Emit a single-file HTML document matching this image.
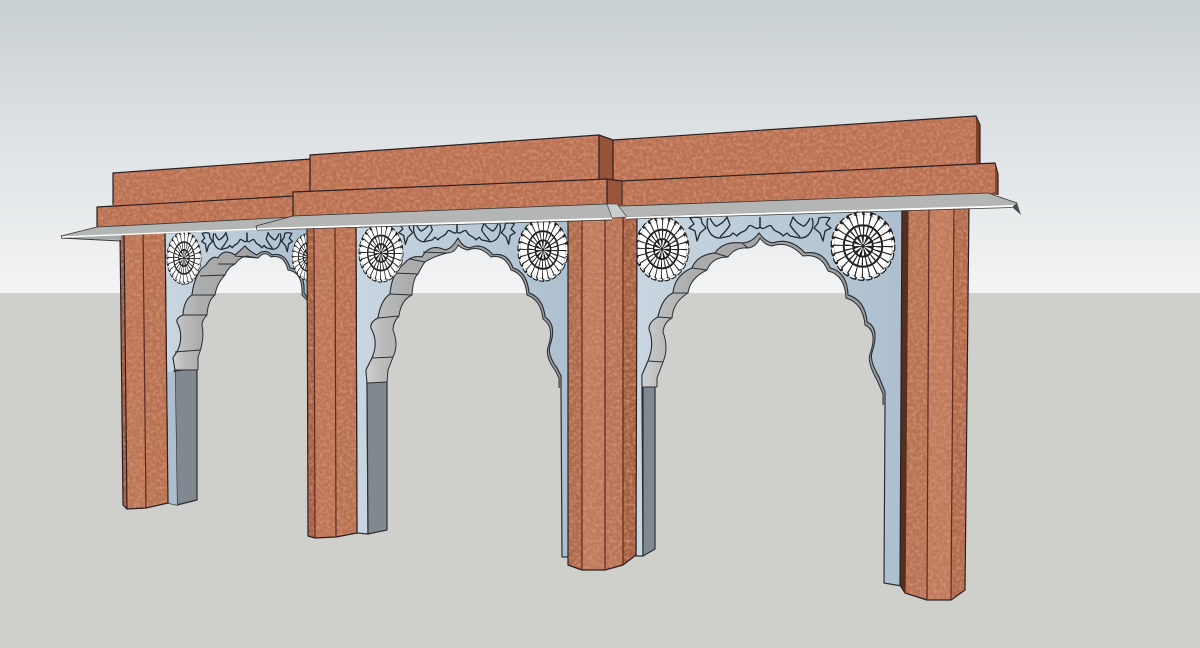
<!DOCTYPE html>
<html><head><meta charset="utf-8"><title>Arches</title>
<style>html,body{margin:0;padding:0;background:#cfd0cb}svg{display:block}
.b{filter:url(#t)}
.l{fill:none;stroke:#2a2022;stroke-width:1.2;stroke-linejoin:round}
.w{stroke:#2a2f35;stroke-width:1.2;stroke-linejoin:round}
.i{fill:none;stroke:#2a2f35;stroke-width:1;stroke-linejoin:round}
.c{fill:#b4b6b6;stroke:#333;stroke-width:.8;stroke-linejoin:round}
.v{fill:none;stroke:#1f2a33;stroke-width:1.3;stroke-linejoin:round;vector-effect:non-scaling-stroke}
</style></head><body>
<svg xmlns="http://www.w3.org/2000/svg" width="1200" height="648" viewBox="0 0 1200 648">
<defs>
<linearGradient id="sky" x1="0" y1="0" x2="0" y2="1"><stop offset="0" stop-color="#c8cfd3"/><stop offset=".5" stop-color="#dfe3e5"/><stop offset="1" stop-color="#f3f4f5"/></linearGradient>
<linearGradient id="bl" x1="0" y1="0" x2="1" y2="0"><stop offset="0" stop-color="#c9d6e1"/><stop offset="1" stop-color="#adbfcf"/></linearGradient>
<linearGradient id="gr" x1="0" y1="0" x2="1" y2="0"><stop offset="0" stop-color="#d0d0d0"/><stop offset=".08" stop-color="#bcbcbc"/><stop offset=".2" stop-color="#acadad"/><stop offset=".5" stop-color="#a3a4a5"/><stop offset="1" stop-color="#999a9b"/></linearGradient>
<filter id="t" x="0" y="0" width="100%" height="100%" color-interpolation-filters="sRGB">
<feTurbulence type="fractalNoise" baseFrequency=".3" numOctaves="3" seed="5" result="n"/>
<feColorMatrix in="n" values="0 0 0 0 .86 0 0 0 0 .6 0 0 0 0 .48 1.6 0 0 0 -.6" result="a"/>
<feComposite in="a" in2="SourceGraphic" operator="in" result="c"/>
<feMerge><feMergeNode in="SourceGraphic"/><feMergeNode in="c"/></feMerge>
</filter>
<g id="ros">
<circle r="29" fill="#fff" stroke="none"/>
<circle r="29.5" fill="none" stroke="#222" stroke-width="3.4" stroke-linecap="round" stroke-dasharray="3.4 4.32"/>
<circle r="29" fill="none" stroke="#fff" stroke-width="2" stroke-linecap="round" stroke-dasharray="3.4 4.32"/>
<circle r="24" fill="none" stroke="#222" stroke-width="9.5" stroke-dasharray="1.05 5.23"/>
<circle r="18.5" fill="#fff" stroke="#222" stroke-width="1.9"/>
<circle r="13.5" fill="none" stroke="#222" stroke-width="8" stroke-dasharray="1.1 2.43"/>
<circle r="9.5" fill="#fff" stroke="#222" stroke-width="1.8"/>
<circle r="5.5" fill="none" stroke="#222" stroke-width="7" stroke-dasharray="1.6 1.5"/>
<circle r="1.8" fill="#222"/>
</g>
<g id="vh">
<path class="v" d="M0 -8V2M0 2C-4 7 -9 -3 -12 2C-15 8 -20 6 -23 11L-27 8L-30 11L-40 13C-50 13 -55 2 -52 -7"/>
<path class="v" d="M-50 -7C-48 -2 -44 2 -43 1C-38 -2 -36 -3 -33 -8L-30 0C-33 5 -36 8 -40 12"/>
<path class="v" d="M-70 -7C-66 -8 -62 -8 -59 -7L-58 -2L-54 3L-60 8L-63 16L-65 6L-71 3L-66 -1Z"/>
</g>
<g id="vine"><use href="#vh"/><use href="#vh" transform="scale(-1,1)"/></g>
</defs>

<rect width="1200" height="293" fill="url(#sky)"/>
<rect y="293" width="1200" height="355" fill="#cfd0cb"/>

<!-- left beams -->
<polygon class="b" fill="#b97053" points="113,173 311,159 311,195 113,207"/>
<polygon class="b" fill="#b86f52" points="97,207 294,196 294,218 97,228"/>
<path class="l" d="M113 205V173L311 159M97 228V207L294 196"/>

<!-- wall 1 -->
<path class="w" fill="url(#bl)" d="M168 503L177 505L174 371L175 370L173 358L178 350Q184 335 177 322Q176 318 183 315Q184 300 192 295Q195 272 206 265Q212 255 218 258Q224 248 235 255Q240 251 245 246Q250 252 257 255Q265 248 272 255Q285 252 290 268Q305 270 304 293L308 299L308 226L165 233Z"/>
<polygon class="w" fill="#81888f" points="175,371 197,368 197,500 177,505"/>
<polygon fill="#aebecd" points="168,372 175,372 177,505 168,503"/>
<path fill="url(#gr)" fill-rule="evenodd" d="M175 370L173 358L178 350Q184 335 177 322Q176 318 183 315Q184 300 192 295Q195 272 206 265Q212 255 218 258Q224 248 235 255Q240 251 245 246Q250 252 257 255Q265 248 272 255Q285 252 290 268Q305 270 304 293L308 299ZM175 370L198 370L198 357Q205 340 202 325Q202 320 207 315Q208 300 215 295Q217 283 225 275Q228 267 235 264Q240 257 247 256Q252 257 258 258Q265 250 271 257Q284 254 288 270Q303 272 302 295L308 301L308 299Z"/>
<path class="i" d="M175 370L173 358L178 350Q184 335 177 322Q176 318 183 315Q184 300 192 295Q195 272 206 265Q212 255 218 258Q224 248 235 255Q240 251 245 246Q250 252 257 255Q265 248 272 255Q285 252 290 268Q305 270 304 293L308 299M198 370L198 357Q205 340 202 325Q202 320 207 315Q208 300 215 295Q217 283 225 275Q228 267 235 264Q240 257 247 256Q252 257 258 258Q265 250 271 257Q284 254 288 270Q303 272 302 295L308 301M175 370L198 370M175 352L200 350M183 315L207 315M192 295L215 295M200 276L225 275M218 264L235 264M235 256L258 258"/>
<use href="#ros" transform="translate(184,258) scale(.56,.86)"/>
<use href="#ros" transform="translate(308,257) scale(.52,.76)"/>
<use href="#vine" transform="translate(247,239) scale(.64,.8)"/>
<!-- pier 1 -->
<g>
<polygon class="b" fill="#9c573c" points="120,232 124,232 127,509 123,505"/>
<polygon class="b" fill="#bb7456" points="124,232 143,232 146,508 127,509"/>
<polygon class="b" fill="#b77052" points="143,232 165,232 168,503 146,508"/>
<path class="l" d="M120 232L123 505L127 509L146 508L168 503L165 232M124 232L127 509"/>
<path class="l" style="stroke:#5c2a22" d="M143 232L146 508"/>
</g>

<!-- wall 2 -->
<path class="w" fill="url(#bl)" d="M357 533L368 534L367 383L366 370L372 358Q379 342 371 328Q370 322 378 318Q381 300 390 294Q392 272 404 264Q411 255 422 257Q430 243 445 250Q452 249 458 238Q462 247 470 248Q482 242 493 255Q507 252 513 268Q527 272 529 293Q543 298 545 317Q557 325 550 345Q547 355 557 368L561 376L561 388L562 557L570 557L570 217L356 227Z"/>
<polygon class="w" fill="#81888f" points="367,383 387,380 387,530 368,534"/>
<path fill="url(#gr)" fill-rule="evenodd" d="M367 383L366 370L372 358Q379 342 371 328Q370 322 378 318Q381 300 390 294Q392 272 404 264Q411 255 422 257Q430 243 445 250Q452 249 458 238Q462 247 470 248Q482 242 493 255Q507 252 513 268Q527 272 529 293Q543 298 545 317Q557 325 550 345Q547 355 557 368L561 376L561 388ZM367 383L387 382L388 370L393 357Q399 345 393 330Q393 322 399 316Q401 300 412 295Q413 278 418 274Q423 264 425 262Q432 257 447 253Q455 253 458 245Q462 249 468 250Q480 245 491 257Q505 254 511 270Q525 274 527 295Q541 300 543 319Q555 327 548 347Q545 357 555 370L559 378L559 388L561 388Z"/>
<path class="i" d="M367 383L366 370L372 358Q379 342 371 328Q370 322 378 318Q381 300 390 294Q392 272 404 264Q411 255 422 257Q430 243 445 250Q452 249 458 238Q462 247 470 248Q482 242 493 255Q507 252 513 268Q527 272 529 293Q543 298 545 317Q557 325 550 345Q547 355 557 368L561 376L561 388M387 382L388 370L393 357Q399 345 393 330Q393 322 399 316Q401 300 412 295Q413 278 418 274Q423 264 425 262Q432 257 447 253Q455 253 458 245Q462 249 468 250Q480 245 491 257Q505 254 511 270Q525 274 527 295Q541 300 543 319Q555 327 548 347Q545 357 555 370L559 378L559 388M367 383L387 382M372 358L393 357M378 318L399 316M390 294L412 295M394 273L418 274M410 259L425 262M423 252L447 253"/>
<use href="#ros" transform="translate(381,253) scale(.72,.95)"/>
<use href="#ros" transform="translate(543,250) scale(.82,1.02)"/>
<use href="#vine" transform="translate(457,230) scale(.82,.9)"/>
<!-- pier 2 -->
<g>
<polygon class="b" fill="#a55f42" points="307,222 314,222 315,538 308,536"/>
<polygon class="b" fill="#bb7456" points="314,222 335,222 336,537 315,538"/>
<polygon class="b" fill="#b77052" points="335,222 356,222 357,533 336,537"/>
<path class="l" d="M307 222L308 536L315 538L336 537L357 533L356 222"/>
<path class="l" style="stroke:#5c2a22" d="M314 222L315 538M335 222L336 537"/>
</g>

<!-- wall 3 -->
<path class="w" fill="url(#bl)" d="M636 556L643 556L642 387L642 375L648 361Q655 345 649 329Q649 322 658 317Q662 298 673 293Q675 275 692 268Q697 255 715 253Q723 241 742 243Q752 243 759 233Q765 242 773 243Q790 237 805 253Q823 250 830 268Q847 272 848 295Q865 300 867 322Q880 328 872 352Q869 360 879 377L885 392L885 405L884 583L902 586L904 207L636 217Z"/>
<polygon class="w" fill="#81888f" points="643,387 655,385 655,549 643,556"/>
<path fill="url(#gr)" fill-rule="evenodd" d="M642 387L642 375L648 361Q655 345 649 329Q649 322 658 317Q662 298 673 293Q675 275 692 268Q697 255 715 253Q723 241 742 243Q752 243 759 233Q765 242 773 243Q790 237 805 253Q823 250 830 268Q847 272 848 295Q865 300 867 322Q880 328 872 352Q869 360 879 377L885 392L885 405ZM642 387L657 387L657 378L663 362Q669 348 663 332Q664 322 672 318Q673 302 688 293Q690 278 707 270Q712 257 728 257Q735 247 748 248Q756 247 760 238Q765 245 772 246Q788 240 803 256Q821 253 828 271Q845 275 846 298Q863 303 865 325Q878 331 870 354Q867 362 877 380L883 394L883 405L885 405Z"/>
<path class="i" d="M642 387L642 375L648 361Q655 345 649 329Q649 322 658 317Q662 298 673 293Q675 275 692 268Q697 255 715 253Q723 241 742 243Q752 243 759 233Q765 242 773 243Q790 237 805 253Q823 250 830 268Q847 272 848 295Q865 300 867 322Q880 328 872 352Q869 360 879 377L885 392L885 405M657 387L657 378L663 362Q669 348 663 332Q664 322 672 318Q673 302 688 293Q690 278 707 270Q712 257 728 257Q735 247 748 248Q756 247 760 238Q765 245 772 246Q788 240 803 256Q821 253 828 271Q845 275 846 298Q863 303 865 325Q878 331 870 354Q867 362 877 380L883 394L883 405M642 387L657 387M648 361L663 362M658 317L672 318M673 293L688 293M692 268L707 270M715 253L728 257M742 243L748 248"/>
<use href="#ros" transform="translate(662,249) scale(.88,1.05)"/>
<use href="#ros" transform="translate(863,246) scale(1.04,1.12)"/>
<use href="#vine" transform="translate(760,225) scale(1,1)"/>

<!-- pier 3 -->
<g>
<polygon class="b" fill="#ac6a4c" points="568,212 582,212 582,570 568,565"/>
<polygon class="b" fill="#bf7a5c" points="582,212 605,212 605,570 582,570"/>
<polygon class="b" fill="#b87256" points="605,212 623,212 623,565 605,570"/>
<polygon class="b" fill="#a25f41" points="623,212 637,212 636,555 623,565"/>
<path class="l" d="M568 212V565L582 570H605L623 565L636 555L637 212"/>
<path class="l" style="stroke:#5c2a22" d="M582 212V570M605 212V570M623 212V565"/>
</g>
<!-- pier 4 -->
<g>
<polygon fill="#55301f" points="902,205 908,205 905,593 900,585"/>
<polygon class="b" fill="#b77154" points="908,205 929,205 927,600 905,593"/>
<polygon class="b" fill="#bf7a5c" points="929,205 954,205 951,600 927,600"/>
<polygon class="b" fill="#b0694c" points="954,205 969,205 965,590 951,600"/>
<path class="l" d="M902 205L900 585L905 593L927 600H951L965 590L969 205"/>
<path class="l" style="stroke:#5c2a22" d="M908 205L905 593M929 205L927 600M954 205L951 600"/>
</g>

<!-- center + right beams -->
<polygon class="b" fill="#b97053" points="310,155 599,135 599,180 310,192"/>
<polygon fill="#97523a" points="599,135 613,140 613,180 599,180"/>
<polygon class="b" fill="#b97053" points="613,140 976,116 976,166 613,182"/>
<polygon fill="#7d4029" points="976,116 980,125 980,165 976,166"/>
<path class="l" d="M310 192V155L599 135L613 140V180M599 135V179M613 140L976 116L980 125V165"/>
<polygon class="b" fill="#b86f52" points="293,192 607,179 607,204 293,216"/>
<polygon fill="#99543a" points="607,179 621,181 621,206 607,205"/>
<polygon class="b" fill="#b86f52" points="621,181 995,163 995,194 621,207"/>
<polygon fill="#8a4a30" points="995,163 998,173 998,195 988,194 995,192"/>
<path class="l" d="M293 216V192L607 179L622 181V205M607 179V205M622 181L995 163L998 174V195"/>

<!-- cornices -->
<polygon fill="#a6aaac" points="61,238 121,240 121,234"/>
<path fill="none" stroke="#333" stroke-width="1" d="M61 238L121 241"/>
<polygon class="c" points="61,236 97,227 296,217 257,229 62,237"/>
<path d="M62 237L256 229" stroke="#fff" stroke-width="1.4"/>
<polygon class="c" points="256,226 293,216 607,204 622,206 988,193 1017,203 1015,206 627,217 612,218 257,229"/>
<polygon fill="#c9cdcc" stroke="#555" stroke-width=".8" points="607,204 617,204 627,217 612,218"/>
<path d="M257 229L612 218.5" stroke="#fff" stroke-width="1.8" fill="none"/>
<path d="M626 217.8L1014 206" stroke="#fff" stroke-width="1.8" fill="none"/>
<path d="M257 230.2L612 220M627 219.2L1012 207.5" stroke="#3a3a3a" stroke-width=".7" fill="none"/>
<polygon fill="#4a4d50" points="1017,203 1021,215 1012,207"/>
</svg>
</body></html>
